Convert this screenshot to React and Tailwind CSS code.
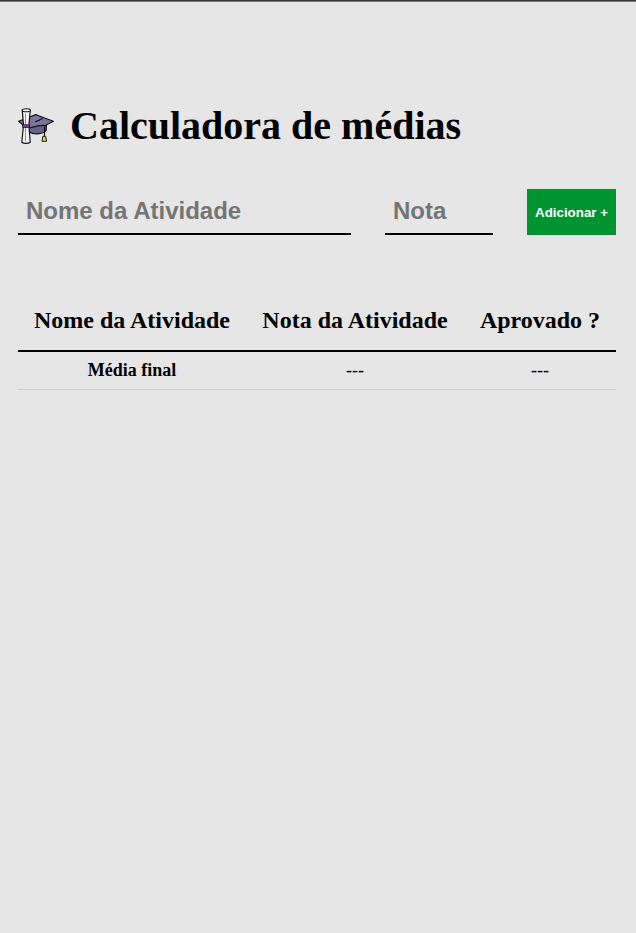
function GraduationIcon() {
  return (
    <svg viewBox="0 0 36 36" className="block size-9 shrink-0" strokeLinejoin="round" strokeLinecap="round">
      <path d="M11 16v8c3 1.800 6.500 2.200 10 1.700 3.500-.5 6.300-1.800 7.200-3.400l.2-7z" fill="#69638a" stroke="#15131c" strokeWidth="1.200" />
      <path d="M.7 13.200 8 10.500 17.700 6.600 24 9l11.400 4.300-8.200 4.200C22.500 16.500 17.500 18.300 11.500 20L5 17z" fill="#7b7599" stroke="#15131c" strokeWidth="1.200" />
      <path d="M17.500 13.600c3-.4 3.700-2.200 6.800-2.800" fill="none" stroke="#15131c" strokeWidth="1.100" />
      <path d="M26.500 17.500v11" fill="none" stroke="#15131c" strokeWidth="1.200" />
      <path d="M25.300 28.300h2.400l.9 5h-4.200z" fill="#f5cf28" stroke="#15131c" strokeWidth="1" />
      <path d="M4.300 2.500 5.500 17 3.800 34.200c2 1.500 6.400 1.500 8.400 0L10.900 17 12.200 2.500z" fill="#f3f5f1" stroke="#15131c" strokeWidth="1.200" />
      <path d="M7.500 6v27" fill="none" stroke="#8c918c" strokeWidth="1" />
      <ellipse cx="8.250" cy="2.200" rx="4.200" ry="1.500" fill="#f3f5f1" stroke="#15131c" strokeWidth="1.100" />
      <path d="M5 16.800h6.500v2.700H5z" fill="#784092" stroke="#25142f" strokeWidth=".8" />
    </svg>
  );
}

const fieldClass =
  "block h-[46px] min-w-0 border-b-2 border-black bg-transparent px-2 text-2xl font-bold outline-none placeholder:text-[#757575] font-['Liberation_Sans',Arial,sans-serif]";

export default function App() {
  return (
    <div className="min-h-screen border-t border-[#393637] bg-[#e6e6e6] font-['Liberation_Serif','Times_New_Roman',serif] text-black">
      <div className="h-px bg-[#777576]" />
      <main className="pl-[18px] pr-5 pt-[101px]">
        <header className="flex h-[46px] items-center gap-4">
          <GraduationIcon />
          <h1 className="whitespace-nowrap text-[40px] font-bold leading-[46px]">Calculadora de médias</h1>
        </header>

        <form className="mt-10 flex justify-between" onSubmit={(event) => event.preventDefault()}>
          <input className={`${fieldClass} w-[333px]`} placeholder="Nome da Atividade" aria-label="Nome da Atividade" />
          <input className={`${fieldClass} w-[108px]`} placeholder="Nota" aria-label="Nota" />
          <button
            type="submit"
            className="h-[46px] w-[89px] whitespace-nowrap bg-[#009430] pt-0.5 text-[13.333px] font-bold text-white font-['Liberation_Sans',Arial,sans-serif]"
          >
            Adicionar +
          </button>
        </form>

        <table className="mt-[55px] w-full table-fixed border-collapse text-center">
          <colgroup>
            <col className="w-[228px]" />
            <col className="w-[218px]" />
            <col className="w-[152px]" />
          </colgroup>
          <thead>
            <tr className="h-[61px] border-b-2 border-black text-2xl leading-7">
              <th className="whitespace-nowrap p-0 font-bold">Nome da Atividade</th>
              <th className="whitespace-nowrap p-0 font-bold">Nota da Atividade</th>
              <th className="whitespace-nowrap p-0 font-bold">Aprovado ?</th>
            </tr>
          </thead>
          <tbody>
            <tr className="h-[38px] border-b border-[#cccccc] text-lg leading-5">
              <td className="p-0 font-bold">Média final</td>
              <td className="p-0">---</td>
              <td className="p-0">---</td>
            </tr>
          </tbody>
        </table>
      </main>
    </div>
  );
}
